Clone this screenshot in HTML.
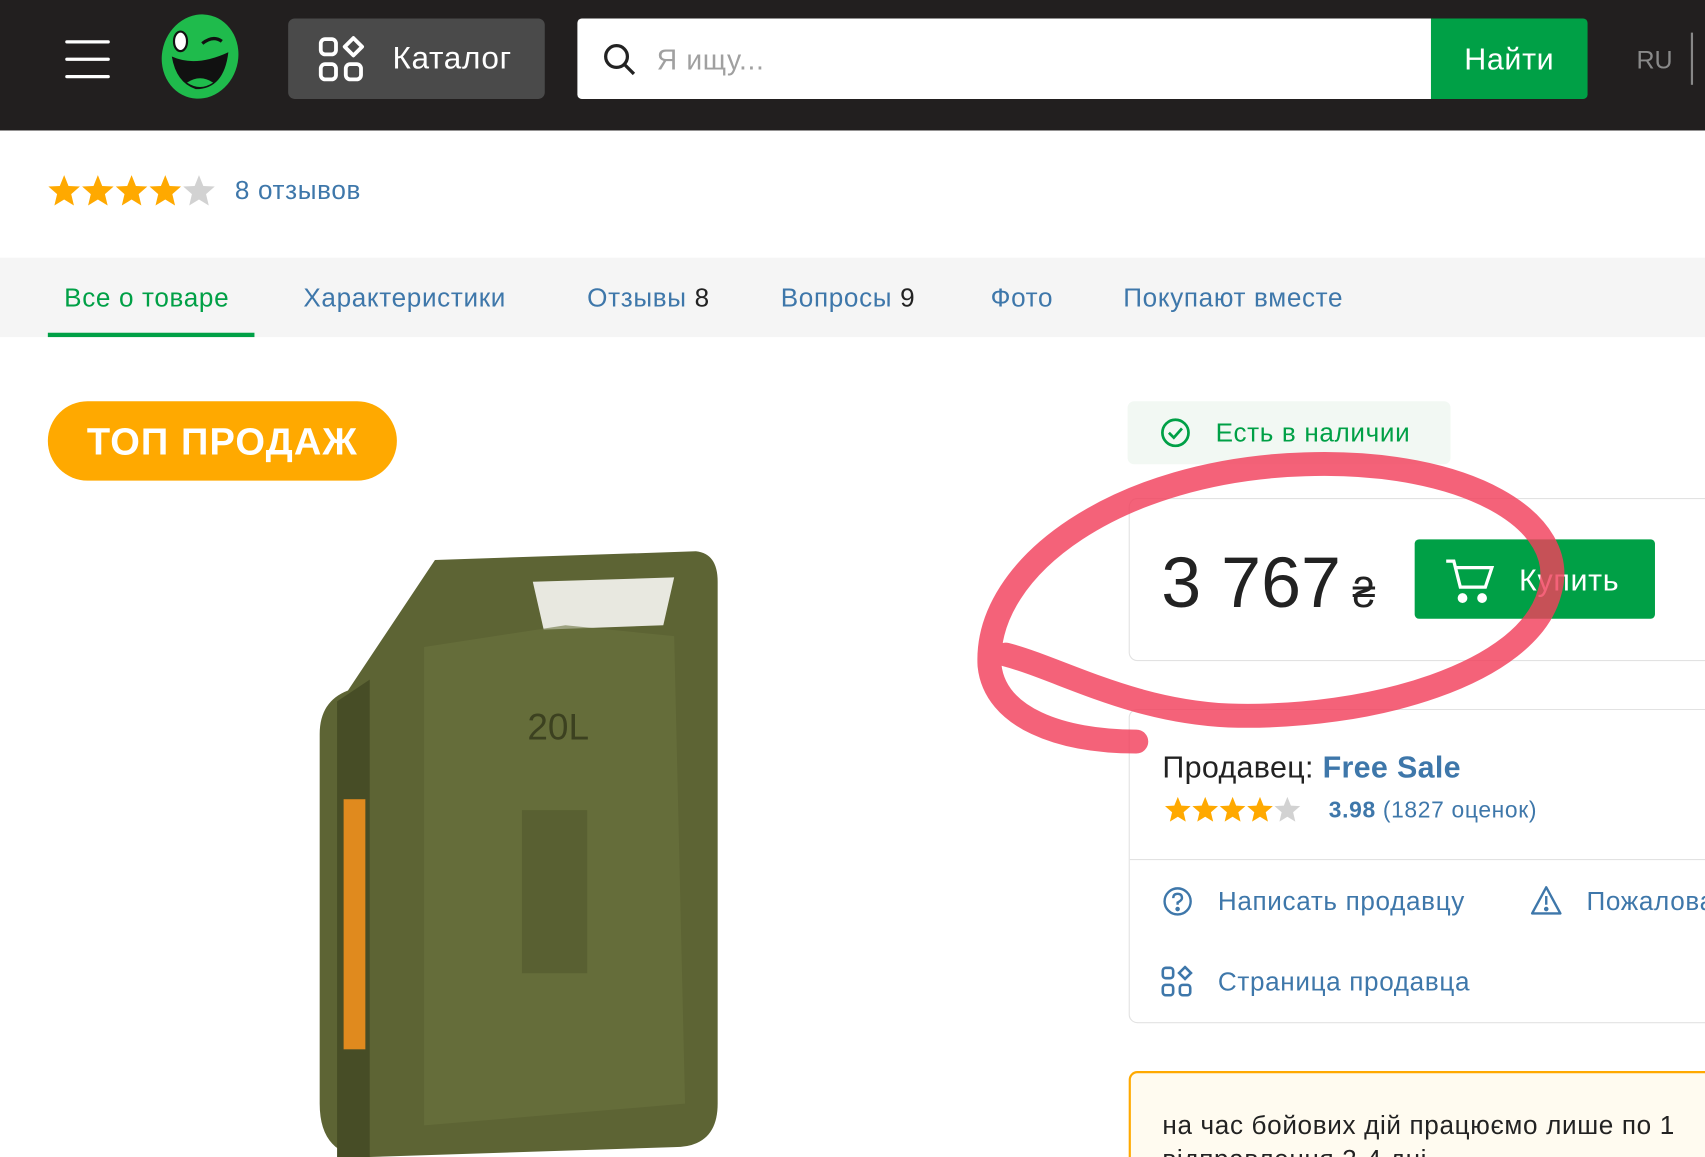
<!DOCTYPE html>
<html><head><meta charset="utf-8"><style>
html,body{margin:0;padding:0;width:1705px;height:1157px;overflow:hidden;background:#fff;}
#w{position:absolute;left:0;top:0;width:1568px;height:1064px;transform:scale(1.08737);transform-origin:0 0;font-family:"Liberation Sans","Noto Sans CJK SC",sans-serif;overflow:hidden;}
.a{position:absolute;white-space:nowrap;}
.blue{color:#3e77aa;}
.t{letter-spacing:0.6px}
</style></head><body><div id="w">
<svg width="0" height="0" style="position:absolute"><defs><path id="st" d="M15 1 L19 11 L29.5 11.5 L21.5 18.5 L24 29 L15 23.5 L6 29 L8.5 18.5 L0.5 11.5 L11 11Z"/></defs></svg>
<div class="a" style="left:0;top:0;width:1568px;height:120px;background:#221f1f"></div>
<div class="a" style="left:60px;top:37px;width:41px;height:3px;background:#fff;border-radius:2px"></div>
<div class="a" style="left:60px;top:53px;width:41px;height:3px;background:#fff;border-radius:2px"></div>
<div class="a" style="left:60px;top:69px;width:41px;height:3px;background:#fff;border-radius:2px"></div>
<svg class="a" style="left:140px;top:10px" width="88" height="86" viewBox="0 0 88 86">
<ellipse cx="44" cy="42" rx="35" ry="39" fill="#1fbb4c" transform="rotate(15 44 42)"/>
<path d="M18 42 Q40 52 70 38 Q66 72 40 72 Q22 66 18 42Z" fill="#111"/>
<path d="M32 66 Q44 58 56 66 Q44 74 32 66Z" fill="#1fbb4c"/>
<ellipse cx="26" cy="28" rx="6" ry="9" fill="#fff" stroke="#111" stroke-width="2"/>
<path d="M46 30 Q56 22 64 28" stroke="#111" stroke-width="3" fill="none"/>
</svg>
<div class="a" style="left:265px;top:17px;width:236px;height:74px;background:#4a4a4a;border-radius:6px"></div>
<svg class="a" style="left:292px;top:33px" width="46" height="44" viewBox="0 0 46 44" fill="none" stroke="#fff" stroke-width="3.5">
<rect x="3" y="3" width="14" height="14" rx="4"/><rect x="3" y="26" width="14" height="14" rx="4"/><rect x="26" y="26" width="14" height="14" rx="4"/><path d="M33 2 L41 10 L33 18 L25 10Z" stroke-linejoin="round"/></svg>
<div class="a t" style="left:361px;top:38px;font-size:29px;color:#fff">Каталог</div>
<div class="a" style="left:531px;top:17px;width:785px;height:74px;background:#fff;border-radius:4px 0 0 4px"></div>
<svg class="a" style="left:554px;top:39px" width="32" height="32" viewBox="0 0 32 32" fill="none" stroke="#222" stroke-width="3"><circle cx="13" cy="13" r="10"/><path d="M20 20 L29 29"/></svg>
<div class="a t" style="left:604px;top:40px;font-size:26px;color:#a0a0a0">Я ищу...</div>
<div class="a t" style="left:1316px;top:17px;width:144px;height:74px;background:#00a046;border-radius:0 4px 4px 0;color:#fff;font-size:28px;line-height:76px;text-align:center">Найти</div>
<div class="a" style="left:1505px;top:42px;font-size:23px;color:#8a8a8a">RU</div>
<div class="a" style="left:1555px;top:30px;width:2px;height:48px;background:#888"></div>

<svg class="a" style="left:44px;top:160px" width="160" height="32" viewBox="0 0 160 32">
<use href="#st" x="0" fill="#ffa900"/><use href="#st" x="31" fill="#ffa900"/><use href="#st" x="62" fill="#ffa900"/><use href="#st" x="93" fill="#ffa900"/><use href="#st" x="124" fill="#d2d2d2"/></svg>
<div class="a blue t" style="left:216px;top:162px;font-size:24px">8 отзывов</div>

<div class="a" style="left:0;top:237px;width:1568px;height:73px;background:#f5f5f5"></div>
<div class="a t" style="left:59px;top:261px;font-size:24px;color:#00a046">Все о товаре</div>
<div class="a" style="left:44px;top:306px;width:190px;height:4px;background:#00a046"></div>
<div class="a blue t" style="left:279px;top:261px;font-size:24px">Характеристики</div>
<div class="a blue t" style="left:540px;top:261px;font-size:24px">Отзывы <span style="color:#222">8</span></div>
<div class="a blue t" style="left:718px;top:261px;font-size:24px">Вопросы <span style="color:#222">9</span></div>
<div class="a blue t" style="left:911px;top:261px;font-size:24px">Фото</div>
<div class="a blue t" style="left:1033px;top:261px;font-size:24px">Покупают вместе</div>

<div class="a" style="left:44px;top:369px;width:321px;height:73px;background:#ffa900;border-radius:37px;color:#fff;font-weight:bold;font-size:35px;line-height:75px;text-align:center;letter-spacing:1px">ТОП ПРОДАЖ</div>

<svg class="a" style="left:280px;top:495px" width="400" height="569" viewBox="0 0 400 569">
<path d="M40 140 L120 20 L360 12 Q380 14 380 40 L380 520 Q380 560 340 560 L60 569 Q14 569 14 520 L14 180 Q14 150 40 140Z" fill="#5d6434"/>
<path d="M30 150 L60 130 L60 569 L30 569Z" fill="#474d26"/>
<path d="M210 40 L340 36 L330 80 L220 84Z" fill="#e8e8e0"/>
<path d="M110 100 L240 80 L340 90 L350 520 L110 540Z" fill="#6b7340" opacity=".6"/>
<path d="M200 250 L260 250 L260 400 L200 400Z" fill="#4e5429" opacity=".5"/>
<text x="205" y="185" font-family="Liberation Sans" font-size="34" fill="#3c4120">20L</text>
<rect x="36" y="240" width="20" height="230" fill="#e08a1e"/>
</svg>

<div class="a" style="left:1037px;top:369px;width:297px;height:58px;background:#f2f8f3;border-radius:6px"></div>
<svg class="a" style="left:1066px;top:383px" width="30" height="30" viewBox="0 0 30 30" fill="none" stroke="#00a046" stroke-width="2.5"><circle cx="15" cy="15" r="12"/><path d="M9 15 L13.5 19.5 L21 11"/></svg>
<div class="a t" style="left:1118px;top:385px;font-size:24px;color:#00a046">Есть в наличии</div>

<div class="a" style="left:1038px;top:458px;width:560px;height:148px;border:1px solid #e2e2e2;border-radius:8px"></div>
<div class="a" style="left:1068px;top:497px;font-size:66px;color:#222">3 767<span style="font-size:38px"> ₴</span></div>
<div class="a" style="left:1301px;top:496px;width:221px;height:73px;background:#00a046;border-radius:4px"></div>
<svg class="a" style="left:1328px;top:512px" width="48" height="44" viewBox="0 0 48 44" fill="none" stroke="#fff" stroke-width="3"><path d="M2 4 L9 4 L15 28 L38 28 L44 10 L11 10"/><circle cx="17" cy="38" r="3" fill="#fff"/><circle cx="35" cy="38" r="3" fill="#fff"/></svg>
<div class="a t" style="left:1397px;top:518px;font-size:28px;color:#fff">Купить</div>

<div class="a" style="left:1038px;top:652px;width:560px;height:287px;border:1px solid #e2e2e2;border-radius:8px"></div>
<div class="a" style="left:1069px;top:690px;font-size:28px;color:#222;letter-spacing:0.3px">Продавец: <b class="blue">Free Sale</b></div>
<svg class="a" style="left:1068px;top:732px" width="136" height="26" viewBox="0 0 160 32">
<use href="#st" x="0" fill="#ffa900"/><use href="#st" x="31" fill="#ffa900"/><use href="#st" x="62" fill="#ffa900"/><use href="#st" x="93" fill="#ffa900"/><use href="#st" x="124" fill="#d2d2d2"/></svg>
<div class="a blue t" style="left:1222px;top:734px;font-size:21px"><b>3.98</b> (1827 оценок)</div>
<div class="a" style="left:1039px;top:790px;width:560px;height:1px;background:#e2e2e2"></div>
<svg class="a" style="left:1068px;top:814px" width="30" height="30" viewBox="0 0 30 30" fill="none" stroke="#3e77aa" stroke-width="2.2"><circle cx="15" cy="15" r="12"/><path d="M11 12 Q11 8 15 8 Q19 8 19 12 Q19 14 15 16 L15 18"/><circle cx="15" cy="22" r="1" fill="#3e77aa"/></svg>
<div class="a blue t" style="left:1120px;top:816px;font-size:24px">Написать продавцу</div>
<svg class="a" style="left:1406px;top:813px" width="32" height="30" viewBox="0 0 32 30" fill="none" stroke="#3e77aa" stroke-width="2.2"><path d="M16 3 L29 27 L3 27Z" stroke-linejoin="round"/><path d="M16 11 L16 19"/><circle cx="16" cy="23" r="1" fill="#3e77aa"/></svg>
<div class="a blue t" style="left:1459px;top:816px;font-size:24px">Пожаловаться</div>
<svg class="a" style="left:1067px;top:888px" width="32" height="30" viewBox="0 0 46 44" fill="none" stroke="#3e77aa" stroke-width="3.5"><rect x="3" y="3" width="14" height="14" rx="4"/><rect x="3" y="26" width="14" height="14" rx="4"/><rect x="26" y="26" width="14" height="14" rx="4"/><path d="M33 2 L41 10 L33 18 L25 10Z"/></svg>
<div class="a blue t" style="left:1120px;top:890px;font-size:24px">Страница продавца</div>

<div class="a" style="left:1038px;top:985px;width:560px;height:120px;border:2px solid #ffa900;background:#fffbf0;border-radius:8px"></div>
<div class="a t" style="left:1069px;top:1020px;font-size:24px;color:#222;line-height:31px">на час бойових дій працюємо лише по 1<br>відправлення 2-4 дні</div>

<svg class="a" style="left:0;top:0" width="1568" height="1064"><path d="M1045 682 C975 682 915 660 910 612 C905 520 1030 432 1200 427 C1350 422 1445 480 1425 545 C1405 620 1260 662 1130 658 C1040 654 975 615 925 602" fill="none" stroke="#f2405c" stroke-width="22" stroke-linecap="round" opacity=".82"/></svg>
</div></body></html>
